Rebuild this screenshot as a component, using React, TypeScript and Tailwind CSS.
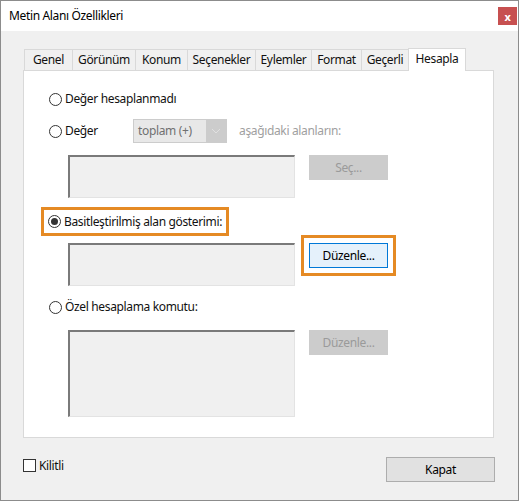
import React from "react";

const tabs: [string, string][] = [
  ["Genel", "w-[49px]"],
  ["Görünüm", "w-[64px]"],
  ["Konum", "w-[53px]"],
  ["Seçenekler", "w-[69px]"],
  ["Eylemler", "w-[57px]"],
  ["Format", "w-[51px]"],
  ["Geçerli", "w-[48px]"],
];

function Radio({ checked = false }: { checked?: boolean }) {
  return (
    <span className="flex h-[13px] w-[13px] shrink-0 items-center justify-center rounded-full border border-[#333333] bg-white">
      {checked && <span className="h-[7px] w-[7px] rounded-full bg-[#333333]" />}
    </span>
  );
}

function Field({ h }: { h: string }) {
  return <div className={`w-[227px] shrink-0 border-t-2 border-l-2 border-t-[#7a7a7a] border-l-[#7a7a7a] border-r border-b border-r-[#e3e3e3] border-b-[#e3e3e3] bg-[#f0f0f0] ${h}`} />;
}

function DisabledButton({ label }: { label: string }) {
  return (
    <div className="ml-[14px] flex h-[25px] w-[79px] items-center justify-center border border-[#cccccc] bg-[#cccccc] text-[#9a9a9a]">
      {label}
    </div>
  );
}

export default function App() {
  return (
    <div
      className="flex h-[501px] w-[519px] flex-col whitespace-nowrap border border-[#8c8c8c] bg-[#f0f0f0] text-[12px] tracking-[-0.35px] text-[#111111]"
      style={{ fontFamily: '"Noto Sans", "Open Sans", sans-serif' }}
    >
      {/* Title bar */}
      <div className="flex h-[30px] shrink-0 items-center justify-between bg-white pl-[8px] pr-[1px]">
        <span className="text-[12px] text-black">Metin Alanı Özellikleri</span>
        <div className="flex h-[18px] w-[19px] items-center justify-center bg-[#c75050] text-[11px] font-bold leading-none text-white">
          x
        </div>
      </div>

      {/* Tabs */}
      <div className="ml-[23px] mt-[17px] flex h-[22px] items-end">
        {tabs.map(([t, w]) => (
          <div
            key={t}
            className={`-mr-px flex h-[21px] items-center justify-center border border-b-0 border-[#d9d9d9] bg-[#f0f0f0] ${w}`}
          >
            {t}
          </div>
        ))}
        <div className="relative z-10 -mb-px flex h-[23px] w-[58px] items-center justify-center border border-b-0 border-[#d9d9d9] bg-white pb-[3px]">
          Hesapla
        </div>
      </div>

      {/* Panel */}
      <div className="ml-[22px] h-[368px] w-[471px] border border-[#d9d9d9] bg-white pt-[17px]">
        <div className="flex h-[22px] items-center gap-[3px] pl-[25px]">
          <Radio />
          <span>Değer hesaplanmadı</span>
        </div>

        <div className="mt-[9px] flex h-[24px] items-center pl-[25px]">
          <Radio />
          <span className="ml-[3px] w-[68px]">Değer</span>
          <div className="flex h-[24px] w-[94px] items-center bg-[#cccccc] p-px">
            <div className="flex h-full w-[73px] items-center bg-[#e8e8e8] pl-[4px] text-[#707070]">toplam (+)</div>
            <svg width="20" height="22" viewBox="0 0 20 22" className="shrink-0">
              <path d="M6 9l4 4 4-4" fill="none" stroke="#e0e0e0" strokeWidth="1" />
            </svg>
          </div>
          <span className="ml-[12px] text-[#a0a0a0]">aşağıdaki alanların:</span>
        </div>

        <div className="mt-[12px] flex items-start pl-[44px]">
          <Field h="h-[43px]" />
          <DisabledButton label="Seç..." />
        </div>

        <div className="ml-[17px] mt-[9px] flex h-[29px] w-[188px] items-center gap-[3px] border-3 border-[#e58a24] pl-[4px]">
          <Radio checked />
          <span>Basitleştirilmiş alan gösterimi:</span>
        </div>

        <div className="mt-[7px] flex items-start pl-[44px]">
          <Field h="h-[43px]" />
          <div className="ml-[14px] flex h-[25px] w-[79px] items-center justify-center border border-[#0078d7] bg-[#e5f1fb] text-black outline-3 outline-offset-[5px] outline-[#e58a24]">
            Düzenle...
          </div>
        </div>

        <div className="mt-[10px] flex h-[22px] items-center gap-[3px] pl-[25px]">
          <Radio />
          <span>Özel hesaplama komutu:</span>
        </div>

        <div className="mt-[12px] flex items-start pl-[44px]">
          <Field h="h-[87px]" />
          <DisabledButton label="Düzenle..." />
        </div>
      </div>

      {/* Bottom */}
      <div className="ml-[22px] mt-[19px] flex w-[472px] items-start justify-between">
        <div className="mt-[1px] flex h-[15px] items-center gap-[3px]">
          <span className="h-[13px] w-[13px] border border-[#333333] bg-white" />
          <span>Kilitli</span>
        </div>
        <div className="flex h-[25px] w-[109px] items-center justify-center border border-[#adadad] bg-[#e1e1e1] text-black">
          Kapat
        </div>
      </div>
    </div>
  );
}
